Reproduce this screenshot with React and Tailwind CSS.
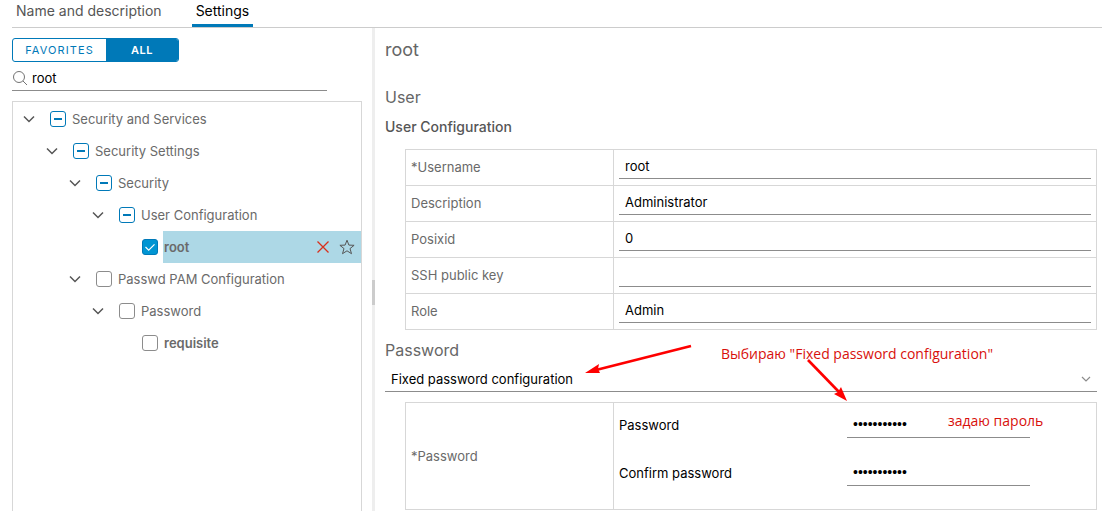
import { useEffect, useRef } from 'react';

const userFields = [
  { id: 'username', label: '*Username', value: 'root' },
  { id: 'description', label: 'Description', value: 'Administrator' },
  { id: 'posixid', label: 'Posixid', value: '0' },
  { id: 'sshkey', label: 'SSH public key', value: '' },
  { id: 'role', label: 'Role', value: 'Admin' },
];

const tree = [
  {
    id: 'services',
    label: 'Security and Services',
    state: 'partial',
    children: [
      {
        id: 'settings',
        label: 'Security Settings',
        state: 'partial',
        children: [
          {
            id: 'security',
            label: 'Security',
            state: 'partial',
            children: [
              {
                id: 'userconf',
                label: 'User Configuration',
                state: 'partial',
                children: [{ id: 'root', label: 'root', state: 'checked', selected: true }],
              },
            ],
          },
          {
            id: 'pam',
            label: 'Passwd PAM Configuration',
            state: 'empty',
            children: [
              {
                id: 'password',
                label: 'Password',
                state: 'empty',
                children: [{ id: 'requisite', label: 'requisite', state: 'empty' }],
              },
            ],
          },
        ],
      },
    ],
  },
];

function TreeCheckbox({ id, state }) {
  const ref = useRef(null);

  useEffect(() => {
    ref.current.indeterminate = state === 'partial';
  }, [state]);

  return (
    <span className="relative flex w-4 h-4 shrink-0">
      <input
        ref={ref}
        id={id}
        type="checkbox"
        defaultChecked={state === 'checked'}
        className="appearance-none w-4 h-4 rounded-[3px] border border-[#8c8c8c] bg-white checked:bg-[#0095d3] checked:border-[#0079b8] indeterminate:border-[#0079b8]"
      />
      {state === 'partial' && (
        <svg className="absolute inset-0 pointer-events-none" width="16" height="16" viewBox="0 0 16 16">
          <path d="M4 8h8" stroke="#0079b8" strokeWidth="2" />
        </svg>
      )}
      {state === 'checked' && (
        <svg className="absolute inset-0 pointer-events-none" width="16" height="16" viewBox="0 0 16 16" fill="none">
          <path d="M3.5 8l3.2 3.2 5.8-5.8" stroke="#fff" strokeWidth="1.2" />
        </svg>
      )}
    </span>
  );
}

function TreeNode({ node }) {
  return (
    <li>
      <div className="flex items-center h-8 pl-[9px]">
        {node.children ? (
          <button type="button" aria-label={`Collapse ${node.label}`} className="w-[14px] h-4 flex items-center justify-center shrink-0">
            <svg width="12" height="12" viewBox="0 0 12 12" fill="none">
              <path d="M1 3.5l5 5 5-5" stroke="#565656" strokeWidth="1.5" />
            </svg>
          </button>
        ) : (
          <span className="w-[14px] shrink-0" />
        )}
        <span className="w-[14px] shrink-0" />
        <TreeCheckbox id={node.id} state={node.state} />
        <div className={node.selected ? 'flex-1 flex items-center h-8 ml-[5px] pl-px pr-[6px] bg-[#add8e6]' : 'flex-1 flex items-center h-8 ml-[5px] pl-px'}>
          <label htmlFor={node.id} className={node.children ? 'flex-1' : 'flex-1 font-semibold'}>
            {node.label}
          </label>
          {node.selected && (
            <div className="flex gap-2">
              <button type="button" aria-label="Remove">
                <svg width="16" height="16" viewBox="0 0 16 16" fill="none">
                  <path d="M2.5 2.5l11 11M13.5 2.5l-11 11" stroke="#d8301c" strokeWidth="1.3" />
                </svg>
              </button>
              <button type="button" aria-label="Add to favorites">
                <svg width="16" height="16" viewBox="0 0 16 16" fill="none">
                  <path d="M8 1.2l1.9 4.9 5.2.2-4.1 3.3 1.5 5.1L8 11.8l-4.5 2.9L5 9.6.9 6.3l5.2-.2z" stroke="#565656" strokeLinejoin="round" />
                </svg>
              </button>
            </div>
          )}
        </div>
      </div>
      {node.children && (
        <ul className="pl-[23px]">
          {node.children.map((child) => (
            <TreeNode key={child.id} node={child} />
          ))}
        </ul>
      )}
    </li>
  );
}

function Sidebar() {
  return (
    <aside className="w-[350px] shrink-0 flex flex-col">
      <div className="flex mt-[10px] h-6 w-[167px] rounded-[3px] border border-[#0079b8] overflow-hidden text-[11px]">
        <button type="button" className="w-[93px] tracking-widest text-[#0079b8]">FAVORITES</button>
        <button type="button" className="flex-1 tracking-wider bg-[#0079b8] text-white font-semibold">ALL</button>
      </div>

      <div className="flex items-center gap-1 mt-1 h-[25px] w-[90%] border-b border-[#8c8c8c]">
        <svg width="16" height="16" viewBox="0 0 16 16" fill="none" className="shrink-0">
          <circle cx="7" cy="7" r="5.5" stroke="#737373" />
          <path d="M11 11l4 4" stroke="#737373" />
        </svg>
        <input type="text" aria-label="Search settings" defaultValue="root" className="flex-1 min-w-0 text-black outline-none" />
      </div>

      <ul className="flex-1 mt-[10px] pt-px border border-b-0 border-[#d7d7d7] text-[#6a6a6a]">
        {tree.map((node) => (
          <TreeNode key={node.id} node={node} />
        ))}
      </ul>
    </aside>
  );
}

function PasswordSection() {
  return (
    <section className="relative mt-2">
      <h3 className="text-base leading-6 text-[#666]">Password</h3>

      <div className="relative">
        <select aria-label="Password configuration" className="block appearance-none w-full h-[30px] pt-[5px] pl-[6px] border-b border-[#8c8c8c] bg-white text-black outline-none">
          <option>Fixed password configuration</option>
        </select>
        <svg className="absolute right-[6px] top-3 pointer-events-none" width="10" height="10" viewBox="0 0 10 10" fill="none">
          <path d="M1 3l4 4 4-4" stroke="#8c8c8c" strokeWidth="1.2" />
        </svg>
      </div>

      <div className="pl-5 mt-[10px]">
        <table className="w-full border-collapse table-fixed">
          <tbody>
            <tr className="h-[107px]">
              <th scope="row" className="w-[208px] pl-[5px] text-left font-normal text-[#6a6a6a] border border-[#d7d7d7]">*Password</th>
              <td className="pl-[5px] pt-2 align-top border border-[#d7d7d7]">
                <div className="grid grid-cols-[228px_183px] gap-y-[21px] items-center text-black">
                  <label htmlFor="new-password">Password</label>
                  <input id="new-password" type="password" defaultValue="qwertyuiop1" className="h-[27px] px-[6px] border-b border-[#8c8c8c] text-sm font-['Liberation_Sans',sans-serif] outline-none" />
                  <label htmlFor="confirm-password">Confirm password</label>
                  <input id="confirm-password" type="password" defaultValue="qwertyuiop1" className="h-[27px] px-[6px] border-b border-[#8c8c8c] text-sm font-['Liberation_Sans',sans-serif] outline-none" />
                </div>
              </td>
            </tr>
          </tbody>
        </table>
      </div>

      {/* Notes drawn over the form */}
      <svg className="absolute left-[200px] top-1 pointer-events-none" width="266" height="62" viewBox="0 0 266 62">
        <path d="M106 4L11 28" stroke="#fe0000" strokeWidth="2.6" />
        <path d="M0 31l14-9-1 5 2 4z" fill="#fe0000" />
        <path d="M223 18l32 33" stroke="#fe0000" strokeWidth="2.6" />
        <path d="M262 59l-13-7 4-2 3-5z" fill="#fe0000" />
      </svg>
      <p className="absolute left-[336px] top-[6px] leading-5 text-sm font-['Open_Sans','Noto_Sans',sans-serif] text-[#d8100c] whitespace-nowrap">
        Выбираю "Fixed password configuration"
      </p>
      <p className="absolute left-[563px] top-[73px] leading-5 text-sm font-['Open_Sans','Noto_Sans',sans-serif] text-[#d8100c] whitespace-nowrap">
        задаю пароль
      </p>
    </section>
  );
}

export default function App() {
  return (
    <div className="min-h-screen flex flex-col bg-white pl-3 text-[13px] leading-5 font-[Inter,sans-serif]">
      {/* Tabs */}
      <nav className="flex h-7 gap-[26px] border-b border-[#ccc] text-sm">
        <button type="button" className="h-[27px] px-1 pb-[5px] text-[#565656]">Name and description</button>
        <button type="button" className="h-[27px] px-1 pb-[2px] border-b-3 border-[#0079b8] text-black">Settings</button>
      </nav>

      <div className="flex-1 flex">
        <Sidebar />

        {/* Resize handle */}
        <div className="w-[3px] ml-[10px] shrink-0 bg-[#eee] flex items-center">
          <div className="w-full h-[25px] mt-[45px] bg-[#ccc]" />
        </div>

        <main className="flex-1 min-w-0 pt-[10px] pl-[10px] pr-[5px]">
          <h1 className="text-lg leading-6 text-[#666]">root</h1>
          <h2 className="mt-[23px] text-base leading-6 text-[#666]">User</h2>
          <h3 className="mt-[6px] text-sm leading-6 font-medium text-[#565656]">User Configuration</h3>

          <div className="pl-5 mt-[10px]">
            <table className="w-full border-collapse table-fixed">
              <tbody>
                {userFields.map((field) => (
                  <tr key={field.id} className="h-9">
                    <th scope="row" className="w-[208px] pl-[5px] pb-[2px] text-left font-normal text-[#6a6a6a] border border-[#d7d7d7]">
                      <label htmlFor={field.id}>{field.label}</label>
                    </th>
                    <td className="px-[5px] pb-[2px] border border-[#d7d7d7]">
                      <input
                        id={field.id}
                        type="text"
                        defaultValue={field.value}
                        className="block w-full h-6 px-[6px] border-b border-[#8c8c8c] text-black outline-none"
                      />
                    </td>
                  </tr>
                ))}
              </tbody>
            </table>
          </div>

          <PasswordSection />
        </main>
      </div>
    </div>
  );
}
